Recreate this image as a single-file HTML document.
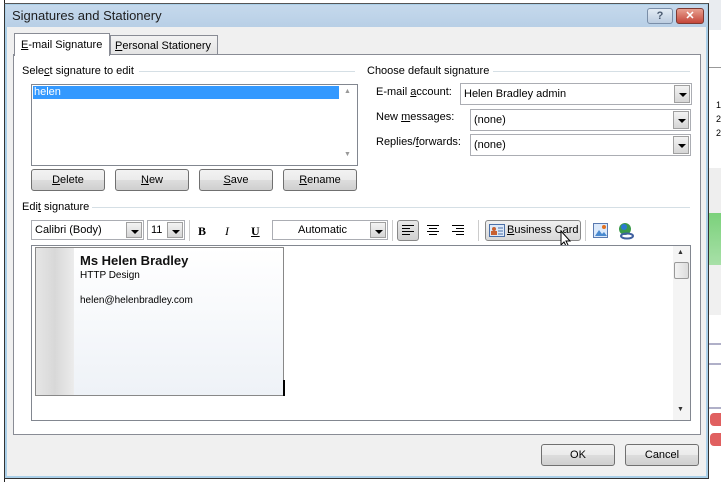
<!DOCTYPE html>
<html><head><meta charset="utf-8"><style>
*{margin:0;padding:0;box-sizing:border-box}
body{width:721px;height:482px;position:relative;overflow:hidden;background:#fff;font-family:"Liberation Sans",sans-serif;font-size:11px;color:#000}
.a{position:absolute}
.t{position:absolute;white-space:nowrap;font-size:11px}
.btn{position:absolute;height:22px;border:1px solid #707070;border-radius:3px;background:linear-gradient(#f2f2f2,#ebebeb 50%,#dddddd 51%,#cfcfcf);text-align:center;line-height:20px;font-size:11px}
.combo{position:absolute;background:#fff;border:1px solid #abadb3;height:22px;line-height:20px;padding-left:3px;font-size:11px}
.arr{position:absolute;right:1px;top:1px;bottom:1px;width:16px;background:linear-gradient(#f3f3f3,#d6d6d6);border:1px solid #a0a0a0}
.arr:after{content:"";position:absolute;left:4px;top:7px;border:4px solid transparent;border-top:4px solid #000;border-bottom:0}
.hl{position:absolute;height:1px;background:#d5dfe5}
u{text-decoration:underline}
</style></head><body>
<div class="a" style="left:709px;top:0;width:12px;height:482px;background:#fff"></div>
<div class="a" style="left:709px;top:0;width:12px;height:30px;background:#e9ecf0"></div>
<div class="a" style="left:709px;top:67px;width:12px;height:1px;background:#999"></div>
<div class="t" style="left:716px;top:100px;font-size:9px">1</div>
<div class="t" style="left:716px;top:114px;font-size:9px">2</div>
<div class="t" style="left:716px;top:128px;font-size:9px">2</div>
<div class="a" style="left:709px;top:168px;width:12px;height:45px;background:#eee"></div>
<div class="a" style="left:709px;top:213px;width:12px;height:52px;background:linear-gradient(#7bd17b,#a8e0a8)"></div>
<div class="a" style="left:709px;top:265px;width:12px;height:50px;background:#f0f0f0"></div>
<div class="a" style="left:709px;top:343px;width:12px;height:2px;background:#b0b0c8"></div>
<div class="a" style="left:709px;top:363px;width:12px;height:2px;background:#b0b0c8"></div>
<div class="a" style="left:709px;top:407px;width:12px;height:2px;background:#b0b0c8"></div>
<div class="a" style="left:710px;top:413px;width:12px;height:13px;background:#e06060;border-radius:4px 0 0 4px"></div>
<div class="a" style="left:710px;top:433px;width:12px;height:13px;background:#e06060;border-radius:4px 0 0 4px"></div>
<div class="a" style="left:0;top:0;width:5px;height:482px;background:#fff;border-right:1px solid #222"></div>
<div class="a" style="left:4px;top:3px;width:705px;height:476px;background:#f0f0f0;border:1px solid #333;border-top-color:#555;box-shadow:inset 0 0 0 2px #aacfe8"></div>
<div class="a" style="left:6px;top:5px;width:701px;height:22px;background:linear-gradient(#c5d9ec,#b8cfe6)"></div>
<div class="t" style="left:12px;top:8px;font-size:13px;color:#1e1e1e">Signatures and Stationery</div>
<div class="a" style="left:647px;top:8px;width:26px;height:16px;border:1px solid #7a8ea8;border-radius:3px;background:linear-gradient(#e3ebf4,#bccde0);text-align:center;font-size:11px;font-weight:bold;color:#4a5a70;line-height:14px">?</div>
<div class="a" style="left:676px;top:8px;width:28px;height:16px;border:1px solid #7d3a33;border-radius:3px;background:linear-gradient(#e8a090,#c4463a);text-align:center;font-size:11px;font-weight:bold;color:#fff;line-height:14px">✕</div>
<div class="a" style="left:110px;top:35px;width:108px;height:20px;border:1px solid #898c95;border-bottom:0;background:linear-gradient(#f3f3f3,#e3e3e3)"></div>
<div class="t" style="left:115px;top:40px"><u>P</u>ersonal Stationery</div>
<div class="a" style="left:13px;top:54px;width:688px;height:381px;background:#fff;border:1px solid #898c95"></div>
<div class="a" style="left:14px;top:33px;width:96px;height:23px;border:1px solid #898c95;border-bottom:0;background:#fff"></div>
<div class="t" style="left:21px;top:39px"><u>E</u>-mail Signature</div>
<div class="t" style="left:22px;top:65px">Sele<u>c</u>t signature to edit</div>
<div class="hl" style="left:139px;top:71px;width:216px"></div>
<div class="a" style="left:31px;top:84px;width:327px;height:82px;border:1px solid #828790;background:#fff"></div>
<div class="a" style="left:33px;top:86px;width:306px;height:13px;background:#3399ff;color:#fff;line-height:12px;padding-left:1px;font-size:11px">helen</div>
<div class="t" style="left:344px;top:88px;font-size:7px;color:#999">▲</div>
<div class="t" style="left:344px;top:151px;font-size:7px;color:#999">▼</div>
<div class="btn" style="left:31px;top:169px;width:74px"><u>D</u>elete</div>
<div class="btn" style="left:115px;top:169px;width:74px"><u>N</u>ew</div>
<div class="btn" style="left:199px;top:169px;width:74px"><u>S</u>ave</div>
<div class="btn" style="left:283px;top:169px;width:74px"><u>R</u>ename</div>
<div class="t" style="left:367px;top:65px">Choose default signature</div>
<div class="hl" style="left:493px;top:71px;width:197px"></div>
<div class="t" style="left:376px;top:86px">E-mail <u>a</u>ccount:</div>
<div class="combo" style="left:460px;top:83px;width:232px">Helen Bradley admin<div class="arr"></div></div>
<div class="t" style="left:376px;top:111px">New <u>m</u>essages:</div>
<div class="combo" style="left:470px;top:109px;width:221px">(none)<div class="arr"></div></div>
<div class="t" style="left:376px;top:136px">Replies/<u>f</u>orwards:</div>
<div class="combo" style="left:470px;top:134px;width:221px">(none)<div class="arr"></div></div>
<div class="t" style="left:22px;top:201px">Edi<u>t</u> signature</div>
<div class="hl" style="left:92px;top:207px;width:598px"></div>
<div class="combo" style="left:31px;top:220px;width:113px;height:20px;line-height:18px;font-size:11px">Calibri (Body)<div class="arr"></div></div>
<div class="combo" style="left:147px;top:220px;width:38px;height:20px;line-height:18px">11<div class="arr"></div></div>
<div class="a" style="left:189px;top:220px;width:1px;height:21px;background:#ccc"></div>
<div class="t" style="left:198px;top:224px;font-family:'Liberation Serif',serif;font-weight:bold;font-size:12px">B</div>
<div class="t" style="left:225px;top:224px;font-family:'Liberation Serif',serif;font-style:italic;font-size:12px">I</div>
<div class="t" style="left:251px;top:224px;font-family:'Liberation Serif',serif;font-weight:bold;text-decoration:underline;font-size:12px">U</div>
<div class="combo" style="left:272px;top:220px;width:116px;height:20px;line-height:18px;text-align:center;padding-right:18px">Automatic<div class="arr"></div></div>
<div class="a" style="left:392px;top:220px;width:1px;height:21px;background:#ccc"></div>
<div class="a" style="left:397px;top:220px;width:22px;height:21px;border:1px solid #888;border-radius:3px;background:linear-gradient(#e8e8e8,#d0d0d0)"></div>
<svg class="a" style="left:400px;top:223px" width="80" height="15"><g stroke="#000" stroke-width="1"><path d="M2 2.5h12M2 5.5h8M2 8.5h12M2 11.5h8"/><path d="M27 2.5h12M29 5.5h8M27 8.5h12M29 11.5h8"/><path d="M52 2.5h12M56 5.5h8M52 8.5h12M56 11.5h8"/></g></svg>
<div class="a" style="left:478px;top:220px;width:1px;height:21px;background:#ccc"></div>
<div class="a" style="left:485px;top:220px;width:96px;height:21px;border:1px solid #888;border-radius:3px;background:linear-gradient(#f0f0f0,#d8d8d8)"></div>
<svg class="a" style="left:489px;top:224px" width="16" height="13"><rect x="0.5" y="0.5" width="15" height="12" fill="#dce8f8" stroke="#4a6fa8"/><circle cx="5" cy="5" r="2" fill="#c86030"/><rect x="2" y="7" width="6" height="4" fill="#c86030"/><path d="M9 4h5M9 7h5M9 10h5" stroke="#4a6fa8"/></svg>
<div class="t" style="left:507px;top:224px"><u>B</u>usiness Card</div>
<svg class="a" style="left:560px;top:230px" width="14" height="20"><path d="M1 1v14l3-3 3 6 2-1-3-6h4z" fill="#fff" stroke="#000"/></svg>
<div class="a" style="left:585px;top:220px;width:1px;height:21px;background:#ccc"></div>
<svg class="a" style="left:593px;top:223px" width="16" height="16"><rect x="0.5" y="0.5" width="14" height="14" fill="#dbe9fb" stroke="#5a7ab0"/><path d="M2 13l4-6 3 4 2-2 3 4z" fill="#4a8ad0"/><circle cx="11" cy="4" r="2" fill="#e07020"/></svg>
<svg class="a" style="left:617px;top:222px" width="18" height="18"><circle cx="8" cy="7" r="6" fill="#3a9a4a"/><circle cx="7" cy="5" r="3" fill="#2a7ad0"/><ellipse cx="10" cy="14" rx="6" ry="2.5" fill="none" stroke="#4060a0" stroke-width="2"/></svg>
<div class="a" style="left:31px;top:245px;width:660px;height:176px;border:1px solid #828790;background:#fff"></div>
<div class="a" style="left:673px;top:246px;width:17px;height:174px;background:#f4f4f4"></div>
<div class="t" style="left:677px;top:249px;font-size:7px;color:#333">▲</div>
<div class="a" style="left:674px;top:262px;width:15px;height:17px;border:1px solid #999;border-radius:2px;background:linear-gradient(90deg,#f3f3f3,#dcdcdc)"></div>
<div class="t" style="left:677px;top:406px;font-size:7px;color:#333">▼</div>
<div class="a" style="left:35px;top:247px;width:249px;height:149px;border:1px solid #888;background:linear-gradient(#fff,#eef2f7)"></div>
<div class="a" style="left:36px;top:248px;width:38px;height:147px;background:linear-gradient(90deg,#e6e6e6,#d8d8d8 50%,#ececec)"></div>
<div class="a" style="left:283px;top:380px;width:2px;height:16px;background:#000"></div>
<div class="t" style="left:80px;top:253px;font-size:13px;font-weight:bold;color:#111">Ms Helen Bradley</div>
<div class="t" style="left:80px;top:270px;font-size:10px">HTTP Design</div>
<div class="t" style="left:80px;top:295px;font-size:10px">helen@helenbradley.com</div>
<div class="btn" style="left:541px;top:444px;width:74px">OK</div>
<div class="btn" style="left:625px;top:444px;width:74px">Cancel</div>
</body></html>
